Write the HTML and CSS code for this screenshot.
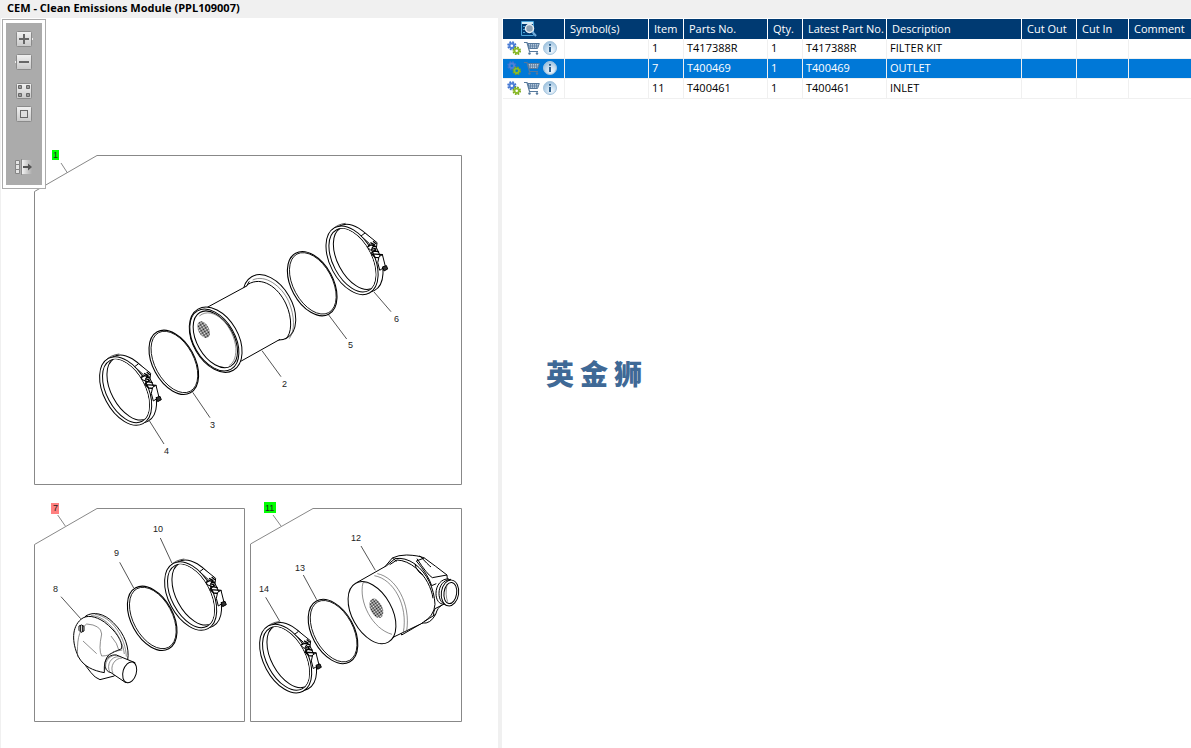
FILE: index.html
```html
<!DOCTYPE html>
<html lang="en">
<head>
<meta charset="utf-8">
<title>CEM - Clean Emissions Module (PPL109007)</title>
<link rel="stylesheet" href="styles.css">
</head>
<body>
<svg class="defs" aria-hidden="true">
  <defs>
    <linearGradient id="face" x1="0" y1="0" x2="0" y2="1"><stop offset="0" stop-color="#f2f2f2"/><stop offset="1" stop-color="#c8c8c8"/></linearGradient>
    <linearGradient id="fade"><stop offset="0" stop-color="#f2f2f2"/><stop offset="1" stop-color="#ababab"/></linearGradient>
    <radialGradient id="glass" cx=".6" cy=".7" r=".8"><stop offset="0" stop-color="#f4faff"/><stop offset="1" stop-color="#8fb9da"/></radialGradient>
    <pattern id="mesh" width="6" height="6" patternUnits="userSpaceOnUse"><path d="M0 0H3V3H0ZM3 3H6V6H3Z" fill="#111"/></pattern>
    <clipPath id="bore"><ellipse cx="107" cy="243" rx="58" ry="103" transform="rotate(-28 107 243)"/></clipPath>
    <symbol id="gears" viewBox="0 0 14 14">
      <circle cx="4.800" cy="4.700" r="3.600" fill="none" stroke="#3f72cf" stroke-width="2" stroke-dasharray="1.700 1.130"/>
      <circle cx="4.800" cy="4.700" r="2.300" fill="none" stroke="#4d80d8" stroke-width="2"/>
      <circle cx="9.700" cy="9.800" r="3.300" fill="none" stroke="#78a818" stroke-width="2" stroke-dasharray="1.560 1.030"/>
      <circle cx="9.700" cy="9.800" r="2.200" fill="none" stroke="#8cbb28" stroke-width="1.800"/>
    </symbol>
    <symbol id="cart" viewBox="0 0 16 14">
      <path d="M0 1.500H3L5.500 10.500H14" fill="none" stroke="#56799c" stroke-width="1.200"/>
      <path d="M4 2.500H15.300L13.500 7.500H5.300Z" fill="#b4c8dc" stroke="#56799c"/>
      <path d="M6.500 3V7.500M8.500 3V7.500M10.500 3V7.500M12.500 3V7.500M4.500 5H14" stroke="#56799c" stroke-width=".7"/>
      <circle cx="5.500" cy="12.500" r="1.200" fill="#56799c"/><circle cx="13" cy="12.500" r="1.200" fill="#56799c"/>
    </symbol>
    <symbol id="info" viewBox="0 0 14 14">
      <circle cx="7" cy="7" r="6.500" fill="url(#glass)" stroke="#a5c4dc"/>
      <path d="M6 6H8V11H6ZM6 3H8V4.800H6Z" fill="#2f628f"/>
    </symbol>
    <g id="ring" fill="none" stroke="#000">
      <ellipse rx="21" ry="34.700" transform="rotate(-28.500)" stroke-width="1.100"/>
      <ellipse cx=".7" rx="19.500" ry="33.300" transform="rotate(-28.500)" stroke-width=".8"/>
    </g>
    <g id="clamp" transform="scale(.3333)" fill="#fff" stroke="#000" stroke-width="3" stroke-linejoin="round">
      <ellipse cx="122" cy="237" rx="66" ry="110" transform="rotate(-28 122 237)"/>
      <ellipse cx="107" cy="243" rx="66" ry="111" transform="rotate(-28 107 243)"/>
      <ellipse cx="108" cy="243" rx="58" ry="103" transform="rotate(-28 108 243)"/>
      <g clip-path="url(#bore)"><ellipse cx="121" cy="236" rx="58" ry="102" transform="rotate(-28 121 236)"/></g>
      <path d="M46 152Q62 135 88 132" fill="none" stroke-width="2"/>
      <path d="M134 170L146 161L182 190L180 206L162 212L153 204L160 194Z"/>
      <path d="M162 190L174 196L166 209M170 186L180 194M154 202L164 197L180 202M164 222L178 212L172 206M168 214L188 218M166 224L198 226L196 236L176 234Z" fill="none" stroke-width="4"/>
      <path d="M188 232L198 226L207 262L190 273L184 250Z"/>
      <path d="M198 263L210 259L214 269L203 275Z" fill="#333"/>
    </g>
  </defs>
</svg>

<header class="titlebar"><h1>CEM - Clean Emissions Module (PPL109007)</h1></header>
<main class="workspace">
  <section class="drawing" aria-label="Exploded drawing">
    <svg class="plate" viewBox="0 18 498 730" role="img" aria-label="Parts 1 to 14">
      <g class="frame">
        <path d="M97 155.500H461.500V484.500H34.500V191.500ZM61 163L67.500 173"/>
        <path d="M97 508.500H244.500V721.500H34.500V544.500ZM57.700 515L65.300 526"/>
        <path d="M313 508.500H461.500V721.500H250.500V544ZM273 515L281 526"/>
      </g>
      <use href="#clamp" transform="translate(90 310)"/>
      <use href="#clamp" transform="translate(316.400 179.300)"/>
      <use href="#clamp" transform="translate(155 515)"/>
      <use href="#clamp" transform="translate(250 577.600)"/>
      <use href="#ring" transform="translate(173.800 362.300)"/>
      <use href="#ring" transform="translate(312.200 283.700)"/>
      <use href="#ring" transform="translate(152.200 618.300)"/>
      <use href="#ring" transform="translate(333 631.500)"/>

      <g class="ink" transform="translate(180 260) scale(.3333)">
        <ellipse cx="268" cy="142" rx="68" ry="106" transform="rotate(-30 268 142)"/>
        <path class="bare" d="M80 143L202 77Q262 55 300 130Q342 205 300 238L175 308Z"/>
        <path class="open" d="M80 143L202 77M300 238L175 308M200 78L208 64M204 73C245 48 294 80 318 132C338 175 336 222 316 238"/>
        <path class="thin" d="M218 60C255 42 305 78 326 124C345 170 345 212 328 236"/>
        <ellipse cx="107" cy="239" rx="68" ry="106" transform="rotate(-30 107 239)"/>
        <ellipse cx="103" cy="240" rx="62" ry="101" transform="rotate(-30 103 240)"/>
        <ellipse cx="106" cy="238" rx="55" ry="93" transform="rotate(-30 106 238)"/>
        <path class="thin" d="M58 168C100 134 162 198 168 266C168 298 158 310 148 316"/>
        <ellipse cx="71" cy="209" rx="16" ry="27" transform="rotate(-28 71 209)" fill="url(#mesh)" stroke="none"/>
      </g>

      <g class="ink" transform="translate(45 500) scale(.3333)">
        <path d="M122 348C145 334 178 340 205 368C240 402 254 445 248 480L208 528L165 539Q150 534 138 518L98 466Z"/>
        <path d="M108 358C124 344 150 347 178 366C212 392 234 425 230 446Q205 456 192 464Q176 480 178 518C145 512 116 500 100 470C80 426 80 382 108 358Z"/>
        <path class="thin" d="M98 470C96 430 98 390 125 372Q168 375 170 402Q160 450 170 468Q195 468 205 455L232 450M114 423L155 461M198 408Q218 430 222 452M138 347C180 345 232 405 238 462M150 343C202 350 242 415 244 470"/>
        <path d="M102 378L110 375L117 379V393L108 397L102 391ZM107 377V394M113 377V394"/>
        <path d="M190 515C170 500 180 462 214 465L270 488L242 548L198 518Z"/>
        <path class="thin" d="M184 510C176 490 190 466 214 465M194 516C184 494 198 469 222 470M204 520C194 500 208 474 232 474"/>
        <ellipse cx="254" cy="517" rx="20" ry="32" transform="rotate(16 254 517)"/>
      </g>

      <g class="ink" transform="translate(335 525) scale(.3333)">
        <path d="M150 125L172 99Q190 90 215 90Q250 91 268 99Q300 122 336 150L342 226L322 240Q308 246 302 268Q286 298 262 294L200 330Z"/>
        <path class="bare" d="M65 175L155 122C220 90 280 150 296 220Q298 270 265 293L135 356Z"/>
        <path class="open" d="M65 173L155 122M135 356L265 293M155 122L180 101Q210 96 240 117C276 145 298 190 300 238Q298 274 260 295M164 119L186 105Q215 106 244 130C272 154 290 190 294 220M172 99L185 109M240 117Q245 140 264 150M268 99L244 108Q280 150 290 182L304 176M246 101Q276 148 292 158L336 150M254 92Q280 120 288 126M302 268L283 280L268 289M322 240L300 251Q294 262 296 273"/>
        <path class="thin" d="M118 152C175 162 220 240 205 322M127 146C182 156 228 236 215 318"/>
        <ellipse cx="111" cy="263" rx="60" ry="101" transform="rotate(-29 111 263)"/>
        <path class="thin" d="M84 173C70 230 112 312 171 328M84 173Q90 172 98 174"/>
        <ellipse cx="124" cy="250" rx="18" ry="31" transform="rotate(-25 124 250)" fill="url(#mesh)" stroke="none"/>
        <path d="M342 162C318 160 303 182 303 205C303 225 312 238 328 238"/>
        <path class="open" d="M348 163C324 164 312 184 312 205C312 225 322 238 336 240"/>
        <ellipse cx="345" cy="204" rx="26" ry="39" transform="rotate(8 345 204)"/>
        <ellipse cx="346" cy="204" rx="19" ry="32" transform="rotate(8 346 204)"/>
        <path class="thin" d="M336 180Q330 210 338 230"/>
      </g>

      <path class="leader" d="M149.300 420.700L164 444M192.700 392.300L210 417.700M262 350.700L281 376.700M328.700 315L346.700 339M374 292L391 311.700M61 596.700L80.700 618.700M119.700 562.300L133.700 588M160.300 538L172 563.300M361 546L375.300 570.300M303.300 575L316.700 599.700M265.700 597.300L280 621.700"/>
      <path class="hot" d="M52 150H59V160H52ZM264 502H276V513H264Z"/>
      <path class="picked" d="M51 503H59V514H51Z"/>
      <g class="callouts">
        <text x="53" y="158">1</text><text x="282" y="387">2</text><text x="210" y="428">3</text>
        <text x="164" y="454">4</text><text x="348" y="348">5</text><text x="394" y="322">6</text>
        <text x="53" y="511">7</text><text x="53" y="592">8</text><text x="114" y="556">9</text>
        <text x="153" y="532">10</text><text x="265" y="511">11</text><text x="351" y="541">12</text>
        <text x="295" y="571">13</text><text x="259" y="592">14</text>
      </g>
    </svg>

    <div class="toolbar" role="toolbar" aria-label="Drawing view">
      <button type="button" aria-label="Zoom in"><svg viewBox="0 0 20 16"><path d="M16.500 5.500L19 8L16.500 10.500" fill="#ddd" stroke="#eee"/><rect x="2.500" y=".5" width="15" height="15" rx="1" fill="url(#face)" stroke="#8a8a8a"/><path d="M5 8H15M10 3V13" stroke="#666" stroke-width="2"/></svg></button>
      <button type="button" aria-label="Zoom out"><svg viewBox="0 0 20 16"><path d="M3.500 5.500L1 8L3.500 10.500" fill="#ddd" stroke="#eee"/><rect x="2.500" y=".5" width="15" height="15" rx="1" fill="url(#face)" stroke="#8a8a8a"/><path d="M5 8H15" stroke="#666" stroke-width="2"/></svg></button>
      <button type="button" class="group" aria-label="Fit all"><svg viewBox="0 0 20 16"><rect x="2.500" y=".5" width="15" height="15" rx="1" fill="url(#face)" stroke="#8a8a8a"/><path d="M4.500 2.500H7.500V5.500H4.500ZM12.500 2.500H15.500V5.500H12.500ZM4.500 10.500H7.500V13.500H4.500ZM12.500 10.500H15.500V13.500H12.500Z" fill="#999" stroke="#666"/></svg></button>
      <button type="button" aria-label="Actual size"><svg viewBox="0 0 20 16"><rect x="2.500" y=".5" width="15" height="15" rx="1" fill="url(#face)" stroke="#8a8a8a"/><rect x="6.500" y="4.500" width="7" height="7" fill="#ddd" stroke="#666"/></svg></button>
      <button type="button" class="last" aria-label="Show list"><svg viewBox="0 0 20 16"><path d="M8 1H18V15H8Z" fill="url(#fade)"/><path d="M1.500 1.500H5.500V5.500H1.500ZM1.500 5.500H5.500V10.500H1.500ZM1.500 10.500H5.500V14.500H1.500Z" fill="#e4e4e4" stroke="#858585"/><path d="M7.500 0V16" stroke="#888"/><path d="M9 8H15" stroke="#555" stroke-width="2"/><path d="M14 4.500L18 8L14 11.500Z" fill="#555"/></svg></button>
    </div>
  </section>

  <section class="list" aria-label="Parts list">
    <table class="parts">
      <colgroup><col class="w-tools"><col class="w-wide"><col class="w-slim"><col class="w-wide"><col class="w-slim"><col class="w-wide"><col class="w-desc"><col class="w-out"><col class="w-in"><col></colgroup>
      <thead>
        <tr>
          <th class="find"><button type="button" aria-label="Search list"><svg width="16" height="16" viewBox="0 0 16 16"><path d="M.5 .5H12.500V14.500H.5Z" fill="#003a72" stroke="#4aa3d8"/><path d="M1 1H12V3H1Z" fill="#d5edfa"/><path d="M2 5.500H4M2 8.500H4M2 11.500H4" stroke="#4aa3d8"/><circle cx="8.500" cy="7.500" r="4" fill="#8fa3b5" stroke="#e8eef3" stroke-width="1.500"/><path d="M11.500 11L15 15" stroke="#6fa9d8" stroke-width="2"/></svg></button></th>
          <th>Symbol(s)</th><th>Item</th><th>Parts No.</th><th>Qty.</th><th>Latest Part No.</th><th>Description</th><th>Cut Out</th><th>Cut In</th><th>Comment</th>
        </tr>
      </thead>
      <tbody>
        <tr>
          <td><div class="tools"><button type="button" aria-label="Options"><svg width="14" height="14"><use href="#gears"/></svg></button><button type="button" aria-label="Add to cart"><svg width="16" height="14"><use href="#cart"/></svg></button><button type="button" aria-label="Information"><svg width="14" height="14"><use href="#info"/></svg></button></div></td>
          <td></td><td>1</td><td>T417388R</td><td>1</td><td>T417388R</td><td>FILTER KIT</td><td></td><td></td><td></td>
        </tr>
        <tr class="selected">
          <td><div class="tools"><button type="button" aria-label="Options"><svg width="14" height="14"><use href="#gears"/></svg></button><button type="button" aria-label="Add to cart"><svg width="16" height="14"><use href="#cart"/></svg></button><button type="button" aria-label="Information"><svg width="14" height="14"><use href="#info"/></svg></button></div></td>
          <td></td><td>7</td><td>T400469</td><td>1</td><td>T400469</td><td>OUTLET</td><td></td><td></td><td></td>
        </tr>
        <tr>
          <td><div class="tools"><button type="button" aria-label="Options"><svg width="14" height="14"><use href="#gears"/></svg></button><button type="button" aria-label="Add to cart"><svg width="16" height="14"><use href="#cart"/></svg></button><button type="button" aria-label="Information"><svg width="14" height="14"><use href="#info"/></svg></button></div></td>
          <td></td><td>11</td><td>T400461</td><td>1</td><td>T400461</td><td>INLET</td><td></td><td></td><td></td>
        </tr>
      </tbody>
    </table>
    <p class="brand" lang="zh"><span>英</span><span>金</span><span>狮</span></p>
  </section>
</main>
</body>
</html>
```
FILE: styles.css
```css
* { box-sizing: border-box; }

body {
  margin: 0;
  min-height: 100vh;
  display: flex;
  flex-direction: column;
  background: #fff;
  color: #000;
  font: 11px/16px "Open Sans", "Noto Sans", sans-serif;
}

button {
  display: block;
  margin: 0;
  padding: 0;
  border: 0;
  background: none;
}

svg { display: block; }

.defs { position: absolute; width: 0; height: 0; }

.titlebar { background: #f0f0f0; padding: 0 7px 2px; }
.titlebar h1 { margin: 0; font-size: 11px; font-weight: 700; line-height: 16px; }

.workspace { flex: 1; display: flex; }

.drawing {
  position: relative;
  flex: 0 0 42.15%;
  border-right: 4px solid #f0f0f0;
  box-shadow: inset 1px 0 #f0f0f0;
}
.plate { width: 100%; }

.frame { fill: none; stroke: #888; stroke-width: 1; }
.leader { fill: none; stroke: #555; stroke-width: 1; }
.ink { fill: #fff; stroke: #000; stroke-width: 3; stroke-linejoin: round; }
.ink .bare { stroke: none; }
.ink .open { fill: none; }
.ink .thin { fill: none; stroke: #555; stroke-width: 2; }
.hot { fill: #0f0; }
.picked { fill: #ff8080; }
.callouts { font: 9px "Liberation Sans", Arial, sans-serif; fill: #222; }

.toolbar {
  position: absolute;
  top: 1px;
  left: 2px;
  padding: 11px 11px 13px;
  display: flex;
  flex-direction: column;
  gap: 7px;
  border: 1px solid #ababab;
  outline: 3px solid #fff;
  outline-offset: -4px;
  background: #ababab;
}
.toolbar svg { width: 20px; height: 16px; }
.toolbar .group { margin-top: 6px; }
.toolbar .last { margin-top: 30px; }

.list { flex: 1; min-width: 0; padding: 1px 0 0 1px; }

.parts { width: 100%; table-layout: fixed; border-collapse: separate; border-spacing: 0; }
.w-tools { width: 62px; }
.w-wide { width: 84px; }
.w-slim { width: 35px; }
.w-desc { width: 135px; }
.w-out { width: 55px; }
.w-in { width: 52px; }

.parts th {
  height: 20px;
  padding: 0 0 0 5px;
  background: #003a72;
  border-right: 1px solid #fff;
  color: #fff;
  font-weight: 400;
  line-height: 18px;
  text-align: left;
  white-space: nowrap;
}
.parts td {
  height: 20px;
  padding: 0 0 2px 3px;
  border-right: 1px solid #f0f0f0;
  border-bottom: 1px solid #f0f0f0;
  line-height: 16px;
  white-space: nowrap;
}
.parts th:last-child,
.parts td:last-child { border-right: 0; }
.parts .selected td { background: #0078d7; color: #fff; }
.parts .find { padding-left: 18px; }
.tools { display: flex; gap: 3px; padding-left: 1px; }

.brand {
  margin: 0;
  padding: 254px 0 0 43px;
  display: flex;
  gap: 6px;
  color: #3f6996;
  font: 900 28px/40px "Noto Sans CJK SC", sans-serif;
}
```
